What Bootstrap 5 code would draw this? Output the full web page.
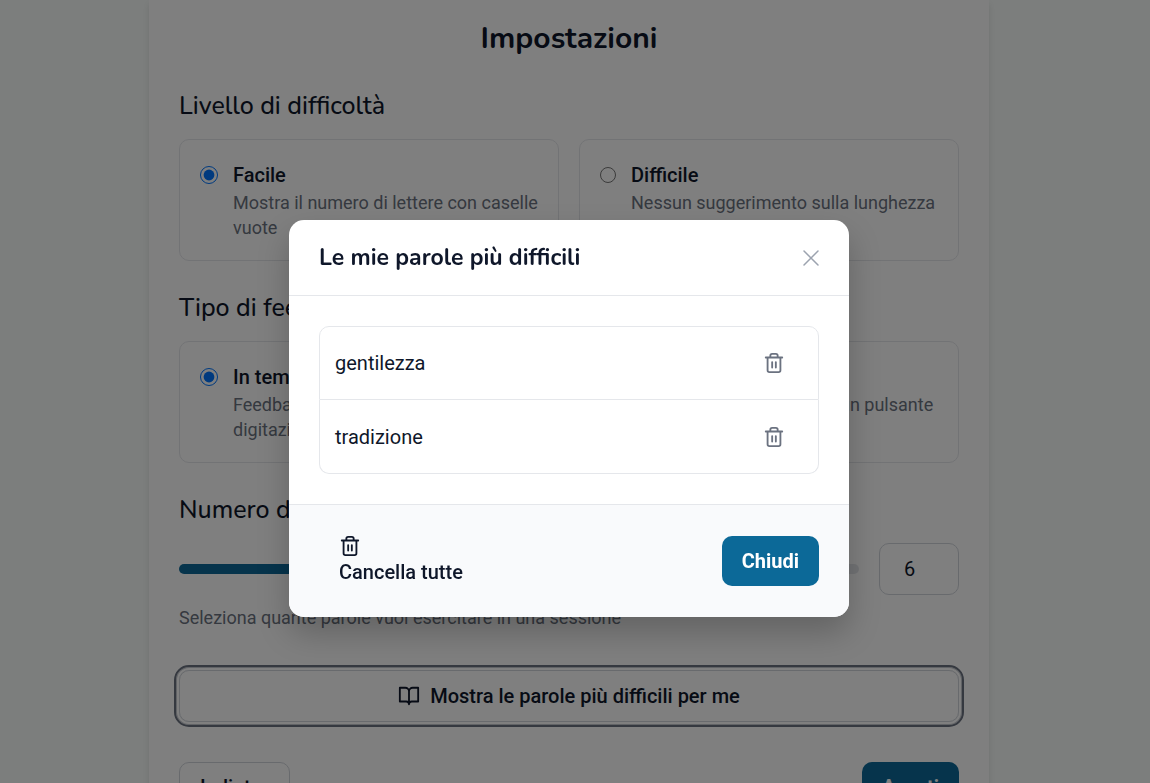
<!DOCTYPE html>
<html lang="it">
<head>
<meta charset="utf-8">
<meta name="viewport" content="width=device-width, initial-scale=1">
<title>Impostazioni</title>
<link href="https://cdn.jsdelivr.net/npm/bootstrap@5.3.0/dist/css/bootstrap.min.css" rel="stylesheet">
<style>
:root { --ink: #0f172a; --muted: #6b7280; --line: #e5e7eb; --brand: #0c6998; --gutter: 12px; }
body { font: 400 20px/30px Roboto, sans-serif; color: var(--ink); background: #f8fcfa; padding-right: var(--gutter); overflow: hidden; }
h1, h2, .modal-title { font-family: Nunito, "Noto Sans", sans-serif; }
.settings { max-width: 840px; padding: 19px 30px 30px; background: #fff; box-shadow: 0 4px 6px rgba(0,0,0,.1); }
.settings h1 { font-size: 30px; line-height: 40px; font-weight: 700; margin-bottom: 30px; }
.settings h2 { font-size: 25px; line-height: 34px; font-weight: 500; margin-bottom: 16px; }
.settings section { margin-bottom: 30px; }
.choices { display: grid; grid-template-columns: 1fr 1fr; gap: 20px; }
.choice { display: flex; gap: 15px; padding: 20px; border: 1px solid var(--line); border-radius: 10px; }
.choice input { flex: none; width: 18px; height: 30px; margin: 0; }
.choice input.compact { width: 16px; }
.choice strong { display: block; font-weight: 500; }
.hint { display: block; font-size: 18px; line-height: 25px; color: var(--muted); }
.count { gap: 20px; margin-bottom: 10px; }
.count input[type=range] { appearance: none; flex: 1; min-width: 0; height: 10px; border-radius: 5px; background: linear-gradient(90deg, var(--brand) 50%, var(--line) 50%); }
.count input[type=range]::-webkit-slider-thumb { appearance: none; width: 24px; height: 24px; border-radius: 50%; background: var(--brand); }
.count input[type=number] { width: 80px; height: 52px; padding: 10px 10px 10px 24px; border: 1px solid #d1d5db; border-radius: 10px; background: #fff; color: var(--ink); line-height: 30px; }
.btn { --bs-btn-font-size: 20px; --bs-btn-line-height: 28px; --bs-btn-padding-x: 20px; --bs-btn-padding-y: 10px; --bs-btn-border-radius: 10px; --bs-btn-font-weight: 500; --bs-btn-color: var(--ink); }
.btn-plain { --bs-btn-border-color: #d1d5db; }
.btn-brand { --bs-btn-line-height: 30px; --bs-btn-bg: var(--brand); --bs-btn-color: #fff; --bs-btn-border-width: 0; --bs-btn-font-weight: 700; }
.btn-words { --bs-btn-line-height: 30px; gap: 10px; margin: 40px 0; outline: 2px solid var(--muted); outline-offset: 3px; box-shadow: 0 0 0 2px #fff, 0 0 0 3px #c3c7cd; }
.line-icon { width: 22px; height: 22px; fill: none; stroke: currentColor; stroke-width: 2; stroke-linecap: round; stroke-linejoin: round; flex: none; }
.words { padding-right: var(--gutter); }
.words .modal-dialog { --bs-modal-width: 560px; max-width: 560px; margin-top: 220px; }
.words .modal-content { border: 0; border-radius: 15px; color: var(--ink); overflow: hidden; box-shadow: 0 16px 32px rgba(0,0,0,.22); }
.words .modal-header { padding: 20px 30px; height: 76px; border-color: var(--line); }
.words .modal-title { font-size: 23px; font-weight: 700; line-height: 30px; }
.plain-icon { padding: 0; border: 0; background: none; color: var(--muted); display: flex; }
.plain-icon .thin { width: 16px; height: 16px; stroke-width: 1.5; color: #9ca3af; }
.words .modal-body { padding: 30px; }
.words .list-group { --bs-list-group-border-color: var(--line); --bs-list-group-border-radius: 10px; }
.words .list-group-item { padding: 21px 33px 21px 15px; color: var(--ink); }
.words .list-group-item + .list-group-item { padding-top: 22px; }
.words .modal-footer { padding: 30px; background: #f9fafc; border-color: var(--line); }
.words .modal-footer > * { margin: 0; }
.btn-stack { --bs-btn-padding-y: 0; --bs-btn-line-height: 30px; border: 0; text-align: left; }
.btn-stack .line-icon { display: block; }
</style>
</head>
<body>
<main class="settings mx-auto">
  <h1 class="text-center">Impostazioni</h1>
  <section>
    <h2>Livello di difficoltà</h2>
    <div class="choices">
      <label class="choice"><input type="radio" name="level" checked><span><strong>Facile</strong><span class="hint">Mostra il numero di lettere con caselle vuote</span></span></label>
      <label class="choice"><input class="compact" type="radio" name="level"><span><strong>Difficile</strong><span class="hint">Nessun suggerimento sulla lunghezza</span></span></label>
    </div>
  </section>
  <section>
    <h2>Tipo di feedback</h2>
    <div class="choices">
      <label class="choice"><input type="radio" name="feedback" checked><span><strong>In tempo reale</strong><span class="hint">Feedback immediato durante la digitazione</span></span></label>
      <label class="choice"><input class="compact" type="radio" name="feedback"><span><strong>Su richiesta</strong><span class="hint">Controllo della parola con un pulsante</span></span></label>
    </div>
  </section>
  <section class="mb-0">
    <h2><label for="count">Numero di parole</label></h2>
    <div class="count d-flex align-items-center">
      <input type="range" min="2" max="10" value="6" aria-label="Numero di parole">
      <input type="number" id="count" value="6">
    </div>
    <span class="hint">Seleziona quante parole vuoi esercitare in una sessione</span>
  </section>
  <button type="button" class="btn btn-plain btn-words w-100 d-flex align-items-center justify-content-center">
    <svg class="line-icon" viewBox="0 0 24 24" aria-hidden="true"><path d="M2 3h6a4 4 0 0 1 4 4v14a3 3 0 0 0-3-3H2zM22 3h-6a4 4 0 0 0-4 4v14a3 3 0 0 1 3-3h7z"/></svg>
    Mostra le parole più difficili per me
  </button>
  <div class="d-flex justify-content-between">
    <button type="button" class="btn btn-plain">Indietro</button>
    <button type="button" class="btn btn-brand">Avanti</button>
  </div>
</main>

<div class="modal-backdrop show"></div>
<div class="modal words d-block" role="dialog" aria-modal="true" aria-labelledby="wordsTitle">
  <div class="modal-dialog">
    <div class="modal-content">
      <div class="modal-header">
        <h3 class="modal-title" id="wordsTitle">Le mie parole più difficili</h3>
        <button type="button" class="plain-icon" aria-label="Chiudi finestra"><svg class="line-icon thin" viewBox="0 0 16 16"><path d="M1 1l14 14M15 1L1 15"/></svg></button>
      </div>
      <div class="modal-body">
        <ul class="list-group">
          <li class="list-group-item d-flex justify-content-between align-items-center">gentilezza
            <button type="button" class="plain-icon" aria-label="Elimina gentilezza"><svg class="line-icon" viewBox="0 0 24 24"><path d="M3 6h18M19 6v14a2 2 0 0 1-2 2H7a2 2 0 0 1-2-2V6M8 6V4a2 2 0 0 1 2-2h4a2 2 0 0 1 2 2v2M10 11v6M14 11v6"/></svg></button></li>
          <li class="list-group-item d-flex justify-content-between align-items-center">tradizione
            <button type="button" class="plain-icon" aria-label="Elimina tradizione"><svg class="line-icon" viewBox="0 0 24 24"><path d="M3 6h18M19 6v14a2 2 0 0 1-2 2H7a2 2 0 0 1-2-2V6M8 6V4a2 2 0 0 1 2-2h4a2 2 0 0 1 2 2v2M10 11v6M14 11v6"/></svg></button></li>
        </ul>
      </div>
      <div class="modal-footer justify-content-between">
        <button type="button" class="btn btn-stack"><svg class="line-icon" viewBox="0 0 24 24" aria-hidden="true"><path d="M3 6h18M19 6v14a2 2 0 0 1-2 2H7a2 2 0 0 1-2-2V6M8 6V4a2 2 0 0 1 2-2h4a2 2 0 0 1 2 2v2M10 11v6M14 11v6"/></svg>Cancella tutte</button>
        <button type="button" class="btn btn-brand">Chiudi</button>
      </div>
    </div>
  </div>
</div>
<script src="https://cdn.jsdelivr.net/npm/bootstrap@5.3.0/dist/js/bootstrap.bundle.min.js"></script>
</body>
</html>
